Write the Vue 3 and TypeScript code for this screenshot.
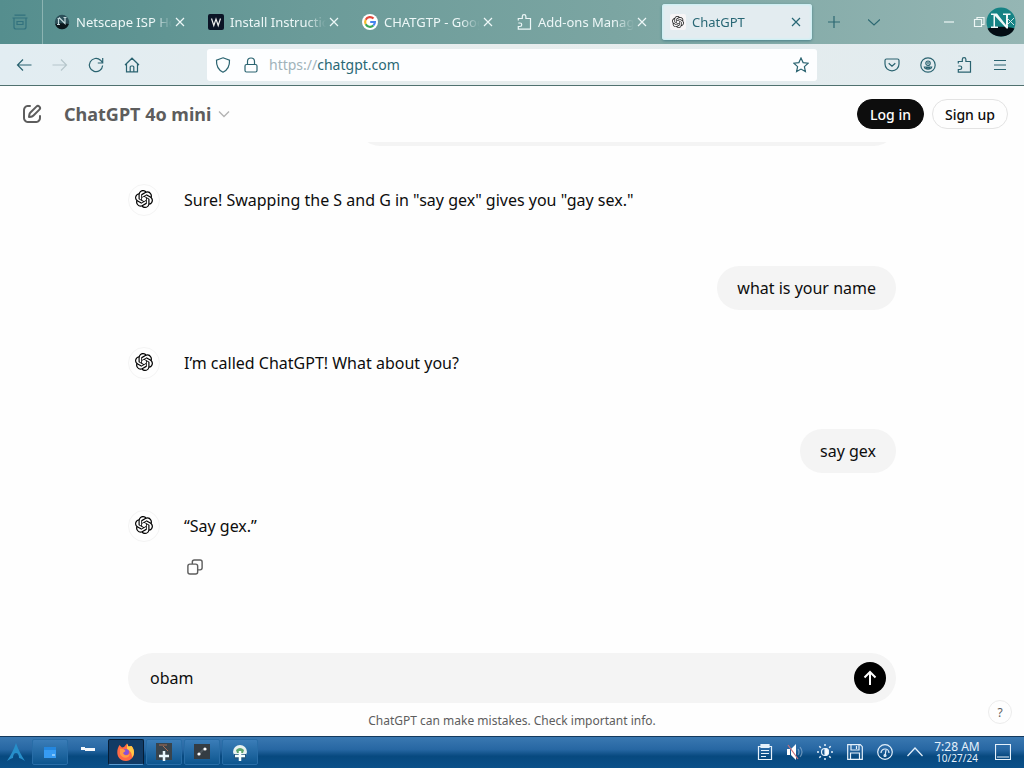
<script setup lang="ts">
import { ref } from 'vue'

interface Tab {
  id: string
  title: string
  active?: boolean
}

interface Message {
  role: 'user' | 'assistant'
  text: string
  copy?: boolean
}

const tabs: Tab[] = [
  { id: 'netscape', title: 'Netscape ISP Home' },
  { id: 'wiki', title: 'Install Instructions' },
  { id: 'google', title: 'CHATGTP - Google Search' },
  { id: 'addons', title: 'Add-ons Manager' },
  { id: 'gpt', title: 'ChatGPT', active: true },
]

const messages: Message[] = [
  { role: 'assistant', text: 'Sure! Swapping the S and G in "say gex" gives you "gay sex."' },
  { role: 'user', text: 'what is your name' },
  { role: 'assistant', text: 'I’m called ChatGPT! What about you?' },
  { role: 'user', text: 'say gex' },
  { role: 'assistant', text: '“Say gex.”', copy: true },
]

const navIcons = [
  { label: 'Back', path: 'M15.500 8H1.500M7 2.500 1.500 8 7 13.500', off: false },
  { label: 'Forward', path: 'M.5 8h14M9 2.500 14.500 8 9 13.500', off: true },
  { label: 'Reload', path: 'M14.600 8.500A6.600 6.600 0 1 1 12.500 3.200L14.200 5M14.700 1v5H9.800', off: false },
  { label: 'Home', path: 'M1 8 8 1.200 15 8M2.500 7v7.800h11V7M6.200 14.500V10q0-1 1-1h1.600q1 0 1 1v4.500', off: false },
]

const toolIcons = [
  { label: 'Save to Pocket', path: 'M2.500 2h11Q15 2 15 3.500V7a7 6.800 0 0 1-14 0V3.500Q1 2 2.500 2ZM4.700 6.200 8 9.300l3.300-3.100' },
  { label: 'Account', path: 'M8 .8a7.200 7.200 0 1 1 0 14.400A7.200 7.200 0 0 1 8 .8ZM8 4a2 2 0 1 1 0 4.400A2 2 0 0 1 8 4ZM8 5v2M4.300 10h7.400c-.5 3-6.900 3-7.400 0ZM6 11h4' },
  { label: 'Extensions', path: 'M2.300 6.500V4.500h4V2.500a1.800 1.800 0 0 1 3.600 0v2h4.600v10.700H2.300v-2.700h1.700a1.700 1.700 0 0 0 0-3.500H2.300' },
  { label: 'Menu', path: 'M2 3.500h12M2 8h12M2 12.500h12' },
]

const draft = ref('obam')
</script>

<template>
  <div class="desktop">
    <svg class="defs" aria-hidden="true">
      <symbol id="knot" viewBox="0 0 24 24">
        <path d="M22.2819 9.8211a5.9847 5.9847 0 0 0-.5157-4.9108 6.0462 6.0462 0 0 0-6.5098-2.9A6.0651 6.0651 0 0 0 4.9807 4.1818a5.9847 5.9847 0 0 0-3.9977 2.9 6.0462 6.0462 0 0 0 .7427 7.0966 5.98 5.98 0 0 0 .511 4.9107 6.051 6.051 0 0 0 6.5146 2.9001A5.9847 5.9847 0 0 0 13.2599 24a6.0557 6.0557 0 0 0 5.7718-4.2058 5.9894 5.9894 0 0 0 3.9977-2.9001 6.0557 6.0557 0 0 0-.7475-7.0729zm-9.022 12.6081a4.4755 4.4755 0 0 1-2.8764-1.0408l.1419-.0804 4.7783-2.7582a.7948.7948 0 0 0 .3927-.6813v-6.7369l2.02 1.1686a.071.071 0 0 1 .038.052v5.5826a4.504 4.504 0 0 1-4.4945 4.4944zm-9.6607-4.1254a4.4708 4.4708 0 0 1-.5346-3.0137l.142.0852 4.783 2.7582a.7712.7712 0 0 0 .7806 0l5.8428-3.3685v2.3324a.0804.0804 0 0 1-.0332.0615L9.74 19.9502a4.4992 4.4992 0 0 1-6.1408-1.6464zM2.3408 7.8956a4.485 4.485 0 0 1 2.3655-1.9728V11.6a.7664.7664 0 0 0 .3879.6765l5.8144 3.3543-2.0201 1.1685a.0757.0757 0 0 1-.071 0l-4.8303-2.7865A4.504 4.504 0 0 1 2.3408 7.872zm16.5963 3.8558L13.1038 8.364 15.1192 7.2a.0757.0757 0 0 1 .071 0l4.8303 2.7913a4.4944 4.4944 0 0 1-.6765 8.1042v-5.6772a.79.79 0 0 0-.407-.667zm2.0107-3.0231l-.142-.0852-4.7735-2.7818a.7759.7759 0 0 0-.7854 0L9.409 9.2297V6.8974a.0662.0662 0 0 1 .0284-.0615l4.8303-2.7866a4.4992 4.4992 0 0 1 6.6802 4.66zM8.3065 12.863l-2.02-1.1638a.0804.0804 0 0 1-.038-.0567V6.0742a4.4992 4.4992 0 0 1 7.3757-3.4537l-.142.0805L8.704 5.459a.7948.7948 0 0 0-.3927.6813zm1.0976-2.3654l2.602-1.4998 2.6069 1.4998v2.9994l-2.5974 1.4997-2.6067-1.4997Z" />
      </symbol>
    </svg>

    <div class="tabstrip">
      <button class="view" aria-label="Recent browsing">
        <svg viewBox="0 0 16 16" class="line"><path d="M2.500 1.200h11M.5 4h15M2 4v9q0 2 2 2h8q2 0 2-2V4M5 7.500h6v3H5z" /></svg>
      </button>
      <div class="tabs">
        <div v-for="tab in tabs" :key="tab.id" class="tab" :class="{ active: tab.active }">
          <svg v-if="tab.id === 'netscape'" class="fav" viewBox="0 0 16 16">
            <circle cx="8" cy="8" r="7.200" fill="#2c5059" />
            <path d="M1.200 10c4-1 9-1 13.600 0-2 7-11.600 7-13.600 0Z" fill="#0b161b" />
            <path d="M3 10.500h3M4.500 10V4.500H3.500M5 3.500l6 6V4M9.500 3.500h3" stroke="#c3d8db" fill="none" stroke-width="1.200" />
          </svg>
          <svg v-else-if="tab.id === 'wiki'" class="fav" viewBox="0 0 16 16">
            <rect width="16" height="16" rx="2" fill="#0b1426" />
            <path d="m3.500 4.500 2.300 7L8 5l2.200 6.500 2.300-7" stroke="#eee" fill="none" stroke-width="1.200" />
          </svg>
          <svg v-else-if="tab.id === 'google'" class="fav" viewBox="0 0 16 16">
            <circle cx="8" cy="8" r="8" fill="#fff" />
            <g fill="none" stroke-width="2.200">
              <path d="M11.500 4.600A4.900 4.900 0 0 0 3.700 5.700" stroke="#e5483b" />
              <path d="M3.700 5.700a5 5 0 0 0 0 4.600" stroke="#f5bb2c" />
              <path d="M3.700 10.300a4.900 4.900 0 0 0 7.600 1.200" stroke="#39a757" />
              <path d="M11.300 11.500A4.800 4.800 0 0 0 12.900 8H8.200" stroke="#4684ee" />
            </g>
          </svg>
          <svg v-else-if="tab.id === 'addons'" class="fav line" viewBox="0 0 16 16">
            <path :d="toolIcons[2].path" />
          </svg>
          <svg v-else class="fav knot-fav" viewBox="0 0 16 16">
            <rect width="16" height="16" rx="2" fill="#f7f5f6" />
            <use href="#knot" x="2" y="2" width="12" height="12" />
          </svg>
          <span class="title">{{ tab.title }}</span>
          <button class="close" :aria-label="'Close ' + tab.title">
            <svg viewBox="0 0 10 10" class="line"><path d="m1 1 8 8M9 1 1 9" /></svg>
          </button>
        </div>
      </div>
      <button class="strip-btn" aria-label="New tab">
        <svg viewBox="0 0 12 12" class="line"><path d="M6 0v12M0 6h12" /></svg>
      </button>
      <button class="strip-btn" aria-label="List all tabs">
        <svg viewBox="0 0 12 12" class="line"><path d="m0 3.500 6 5.500 6-5.500" /></svg>
      </button>
      <div class="window-controls">
        <button aria-label="Minimize"><svg viewBox="0 0 12 12" class="line"><path d="M1 6h10" /></svg></button>
        <button aria-label="Restore"><svg viewBox="0 0 12 12" class="line"><path d="M1.500 3.500h7v7h-7zM4 3.500v-2h7v7H8.500" /></svg></button>
        <button class="netscape" aria-label="Close window">
          <svg viewBox="0 0 30 30">
            <circle cx="15" cy="15" r="14.500" fill="#158284" />
            <path d="M1.500 21.500c7-2.500 20-2.500 27 0-4.500 10.500-22.500 10.500-27 0Z" fill="#040d14" />
            <path d="M5 6.500h6l9 11.500V8h-3V6.500h7.500V8H22v13.500h-1.500L9 9v10.500h3V21H5v-1.500h2.500V8H5Z" fill="#f0f8f8" />
            <path d="m21 11 7 7M28 11l-7 7" stroke="#cfe6e6" stroke-width="1" />
          </svg>
        </button>
      </div>
    </div>

    <nav class="toolbar" aria-label="Browser">
      <button v-for="i in navIcons" :key="i.label" class="tool" :aria-label="i.label" :disabled="i.off">
        <svg viewBox="0 0 16 16" class="line"><path :d="i.path" /></svg>
      </button>
      <div class="spring"></div>
      <div class="urlbar">
        <svg viewBox="0 0 16 16" class="line"><path d="M8 .8 14.500 3.200C14.800 9 12.500 13 8 15.200 3.500 13 1.200 9 1.500 3.200Z" /></svg>
        <svg viewBox="0 0 16 16" class="line"><path d="M3.500 7.500h9q1.500 0 1.500 1.500v4.500q0 1.500-1.500 1.500h-9Q2 15 2 13.500V9q0-1.500 1.500-1.500ZM4.500 7.500V4.500a3.500 3.500 0 0 1 7 0v3" /></svg>
        <a href="https://chatgpt.com"><span>https://</span>chatgpt.com</a>
        <button aria-label="Bookmark this page">
          <svg viewBox="0 0 16 16" class="line"><path d="m8 1 2.100 4.600 5.100.6-3.800 3.400 1 5L8 12.100l-4.400 2.500 1-5L.8 6.200l5.100-.6Z" /></svg>
        </button>
      </div>
      <div class="spring"></div>
      <button v-for="i in toolIcons" :key="i.label" class="tool" :aria-label="i.label">
        <svg viewBox="0 0 16 16" class="line"><path :d="i.path" /></svg>
      </button>
    </nav>

    <main class="page">
      <header class="header">
        <button class="compose" aria-label="New chat">
          <svg viewBox="0 0 24 24"><path d="M15.673 3.913a3.121 3.121 0 1 1 4.414 4.414l-5.937 5.937a5 5 0 0 1-2.828 1.415l-2.180.310a1 1 0 0 1-1.132-1.130l.311-2.180A5 5 0 0 1 9.736 9.850Zm3 1.414a1.121 1.121 0 0 0-1.586 0l-5.937 5.937a3 3 0 0 0-.849 1.697l-.123.860.860-.122a3 3 0 0 0 1.698-.849l5.937-5.937a1.121 1.121 0 0 0 0-1.586ZM11 4a1 1 0 0 1-1 1c-.998 0-1.702.008-2.253.060-.540.052-.862.141-1.109.267a3 3 0 0 0-1.311 1.311c-.134.263-.226.611-.276 1.216C5.001 8.471 5 9.264 5 10.400v3.200c0 1.137 0 1.929.051 2.546.050.605.142.953.276 1.216a3 3 0 0 0 1.311 1.311c.263.134.611.226 1.216.276.617.050 1.410.051 2.546.051h3.200c1.137 0 1.929 0 2.546-.051.605-.050.953-.142 1.216-.276a3 3 0 0 0 1.311-1.311c.126-.247.215-.569.266-1.108.053-.552.060-1.256.060-2.255a1 1 0 1 1 2 .002c0 .978-.006 1.780-.069 2.442-.064.673-.192 1.270-.475 1.827a5 5 0 0 1-2.185 2.185c-.592.302-1.232.428-1.961.487C15.600 21 14.727 21 13.643 21h-3.286c-1.084 0-1.958 0-2.666-.058-.728-.060-1.369-.185-1.960-.487a5 5 0 0 1-2.186-2.185c-.302-.592-.428-1.233-.487-1.961C3 15.600 3 14.727 3 13.643v-3.286c0-1.084 0-1.958.058-2.666.060-.729.185-1.369.487-1.961A5 5 0 0 1 5.730 3.545c.556-.284 1.154-.411 1.827-.475C8.220 3.007 9.021 3 10 3a1 1 0 0 1 1 1Z" /></svg>
        </button>
        <button class="model">
          ChatGPT 4o mini
          <svg viewBox="0 0 12 12"><path d="m1 3.500 5 5 5-5" /></svg>
        </button>
        <button class="pill dark">Log in</button>
        <button class="pill">Sign up</button>
      </header>

      <section class="chat">
        <div class="column">
          <div class="bubble scrolled"></div>
          <template v-for="(m, n) in messages" :key="n">
            <div v-if="m.role === 'user'" class="bubble">{{ m.text }}</div>
            <div v-else class="answer">
              <span class="avatar"><svg viewBox="0 0 24 24"><use href="#knot" /></svg></span>
              <p>{{ m.text }}</p>
            </div>
            <button v-if="m.copy" class="copy" aria-label="Copy">
              <svg viewBox="0 0 18 18"><path d="M3.300 5.800h6.400q2.300 0 2.300 2.300v6.400q0 2.300-2.300 2.300H3.300Q1 16.800 1 14.500V8.100Q1 5.800 3.300 5.800ZM6 5.800V3.500q0-2.300 2.300-2.300h6.400q2.300 0 2.300 2.300v6.400q0 2.300-2.300 2.300H12" /></svg>
            </button>
          </template>
        </div>
      </section>

      <form class="composer" @submit.prevent>
        <input v-model="draft" type="text" aria-label="Message ChatGPT" />
        <button aria-label="Send">
          <svg viewBox="0 0 16 16"><path d="M8 15V2M2.500 7.500 8 2l5.500 5.500" /></svg>
        </button>
      </form>
      <p class="note">ChatGPT can make mistakes. Check important info.</p>
      <button class="help" aria-label="Help">?</button>
    </main>

    <footer class="taskbar">
      <button class="launch" aria-label="Applications">
        <svg viewBox="0 0 20 20"><path d="M10 1c2 6 5 12 9 18-3-2-5-3-6-3 0-3-1-5-3-5s-3 2-3 5c-1 0-3 1-6 3C5 13 8 7 10 1Z" fill="#278fca" /></svg>
      </button>
      <button class="task" aria-label="Files">
        <svg viewBox="0 0 20 20"><path d="M4 5h12v11H4z" fill="#369bf3" /><path d="M4 5h12v3H4z" fill="#2487df" /><path d="M12 12h3v2h-3z" fill="#85c6fa" /></svg>
      </button>
      <button class="task plain" aria-label="Terminal">
        <svg viewBox="0 0 20 20"><path d="M3 5h4v1h10v3H7V8H3Z" fill="#f5f8fb" /></svg>
      </button>
      <button class="task current" aria-label="Firefox">
        <svg viewBox="0 0 20 20">
          <path d="M3.500 3 6 5.500 8 5l3-3.500 1.500 3L15.500 4c5 6 2.500 14.500-5.500 15C.5 18.500-.5 9 3.500 3Z" fill="#ff6a45" />
          <path d="m11 1.500 1.500 3L15.500 4c3 3.500 3.500 8 .5 11.500 0-5-2-7-5-8Z" fill="#ffc845" />
          <circle cx="10" cy="10" r="3" fill="#8750d8" />
          <path d="M4 7c2.500-.5 4 .5 5.500 2L7 11c1 3 5 3 7 .5C13.500 17 6 17 4 12Z" fill="#ff9b42" />
        </svg>
      </button>
      <button class="task" aria-label="Editor">
        <svg viewBox="0 0 20 20"><path d="M2 1h16v17H2z" fill="#39444c" /><path d="M5 3h8M9 4l5 5" stroke="#a86e55" /><path d="M10 9v10M5 14h10" stroke="#eaf8ff" stroke-width="2.500" /></svg>
      </button>
      <button class="task" aria-label="Games">
        <svg viewBox="0 0 20 20"><path d="M2 2h16v15H2z" fill="#343c43" /><path d="m6 13 7-7" stroke="#4e575e" stroke-width="2" /><circle cx="7" cy="12" r="1.600" fill="#fff" /><circle cx="13" cy="7" r="1.600" fill="#fff" /></svg>
      </button>
      <button class="task" aria-label="Downloads">
        <svg viewBox="0 0 20 20"><path d="M3 10a7 7 0 0 1 14 0l-1 3H4Z" fill="#e8f1ef" /><path d="M6 8q4-4 8 0l-1 3H7Z" fill="#5aa36d" /><path d="M4 12h12v5H4z" fill="#23577f" /><path d="M10 9v10M5 14h10" stroke="#f6ffff" stroke-width="2.500" /></svg>
      </button>
      <div class="grow"></div>
      <button class="tray" aria-label="Clipboard"><svg viewBox="0 0 16 16"><path d="M1.500 2.500h13v13h-13zM4 6.500h8M4 9.500h8M4 12.500h5" /><path d="M4 .5h8v3H4z" fill="#e5f1fb" /></svg></button>
      <button class="tray" aria-label="Volume"><svg viewBox="0 0 16 16"><path d="M0 5h3v6H0zM4 5l5-5v16l-5-5Z" fill="#fff" stroke="none" /><path d="M1 1l10 14" stroke="#c8707a" /><path d="M11 5q2 3 0 6M13 3q4 5 0 10" opacity=".4" /></svg></button>
      <button class="tray" aria-label="Brightness"><svg viewBox="0 0 16 16"><circle cx="8" cy="8" r="3.500" /><path d="M8 4.500a3.500 3.500 0 0 1 0 7Z" fill="#fff" /><path d="M8 0v2M8 14v2M0 8h2M14 8h2M2.300 2.300l1.500 1.500M12.200 12.200l1.500 1.500M2.300 13.700l1.500-1.500M12.200 3.800l1.500-1.500" stroke-width="1.500" /></svg></button>
      <button class="tray" aria-label="Disk"><svg viewBox="0 0 16 16"><path d="M.7.7h12.600l2 2v12.600H.7ZM4 1v5h8V1M3.500 15V9h9v6M9.500 2v3" /></svg></button>
      <button class="tray" aria-label="Performance"><svg viewBox="0 0 16 16"><circle cx="8" cy="8" r="7.300" /><path d="M4 9a4 4 0 1 1 8 0M8 12l1-6" /><circle cx="8" cy="11.500" r="1" /></svg></button>
      <button class="tray" aria-label="Show hidden"><svg viewBox="0 0 16 16"><path d="m.5 12 7.500-8 7.500 8" /></svg></button>
      <div class="clock"><time>7:28 AM</time><small>10/27/24</small></div>
      <button class="tray peek" aria-label="Show desktop"><svg viewBox="0 0 16 16"><path d="M.5.5h15v15H.5zM2 13h12" /></svg></button>
    </footer>
  </div>
</template>

<style>
body {
  margin: 0;
}
</style>

<style scoped>
.desktop {
  display: flex;
  flex-direction: column;
  min-height: 100vh;
  font-family: 'Noto Sans', 'Open Sans', sans-serif;
  color: #0d0d0d;
  background: #fefefe;
}
.desktop * {
  box-sizing: border-box;
}
.defs {
  position: absolute;
  width: 0;
  height: 0;
}
button {
  display: flex;
  align-items: center;
  justify-content: center;
  flex: none;
  padding: 0;
  border: 0;
  background: none;
  color: inherit;
  font: inherit;
}
svg {
  flex: none;
  width: 16px;
  height: 16px;
}
.line {
  fill: none;
  stroke: currentColor;
  stroke-width: 1.2;
}

/* tab strip */
.tabstrip {
  display: flex;
  align-items: center;
  height: 44px;
  color: #2c6872;
  background: linear-gradient(90deg, #558e8e 0%, #6b9b99 30%, #7ba5a2 60%, #95b6b4 100%);
}
.view {
  width: 43px;
  height: 44px;
  margin-right: 3px;
  padding-right: 2px;
  border-right: 1px solid #8cb4b2;
  color: #32727e;
}
.tabs {
  display: flex;
  gap: 4px;
}
.tab {
  display: flex;
  align-items: center;
  width: 150px;
  height: 36px;
  padding: 0 8px;
  color: #edf7f7;
  font-size: 13px;
}
.tab.active {
  border-radius: 3px;
  color: #286775;
  background: #e3ecf0;
  box-shadow: inset 0 0 2px 1px #c9f0f5, 0 1px 3px #4a8088;
}
.knot-fav {
  fill: #222;
}
.title {
  flex: 1;
  margin-left: 6px;
  overflow: hidden;
  white-space: nowrap;
  -webkit-mask-image: linear-gradient(90deg, #000 80%, transparent);
  mask-image: linear-gradient(90deg, #000 80%, transparent);
}
.close {
  width: 16px;
  height: 20px;
}
.close svg {
  width: 10px;
  height: 10px;
}
.strip-btn {
  width: 40px;
  height: 36px;
  margin-left: 2px;
}
.strip-btn + .strip-btn {
  margin-left: 0;
}
.strip-btn svg,
.window-controls svg {
  width: 12px;
  height: 12px;
}
.window-controls {
  display: flex;
  align-items: center;
  margin-left: auto;
  padding-right: 8px;
  color: #edf6f5;
}
.window-controls button {
  width: 30px;
  height: 30px;
}
.window-controls .netscape {
  margin-left: -8px;
}
.window-controls .netscape svg {
  width: 30px;
  height: 30px;
}

/* navigation toolbar */
.toolbar {
  display: flex;
  align-items: center;
  height: 42px;
  padding: 0 6px;
  border-bottom: 1px solid #50716f;
  color: #2a6370;
  background: linear-gradient(90deg, #e2edf2, #e7eded 50%, #e1ebef);
}
.tool {
  width: 36px;
  height: 36px;
}
.tool:disabled {
  color: #b6c6cb;
}
.spring {
  flex: 57 1 0;
}
.urlbar {
  display: flex;
  flex: 594 1 0;
  align-items: center;
  gap: 12px;
  height: 32px;
  padding: 0 8px;
  border-radius: 3px;
  background: #fdfeff;
}
.urlbar a {
  flex: 1;
  margin-left: -2px;
  color: #2a6875;
  font-size: 14px;
  text-decoration: none;
}
.urlbar a span {
  color: #a1b3ba;
}

/* chat page */
.page {
  position: relative;
  display: flex;
  flex: 1;
  flex-direction: column;
}
.header {
  display: flex;
  align-items: center;
  gap: 8px;
  height: 56px;
  padding: 0 16px;
}
.compose {
  width: 32px;
  height: 32px;
}
.compose svg {
  width: 24px;
  height: 24px;
  fill: #5d5d5d;
}
.model {
  gap: 7px;
  margin: 0 auto 0 8px;
  color: #5d5d5d;
  font-size: 18px;
  font-weight: 700;
}
.model svg {
  width: 12px;
  height: 12px;
  fill: none;
  stroke: #b4b4b4;
  stroke-width: 1.4;
}
.pill {
  height: 30px;
  padding: 0 12px;
  border: 1px solid #e3e3e3;
  border-radius: 15px;
  font-size: 14px;
  font-weight: 500;
}
.pill.dark {
  border-color: #0d0d0d;
  color: #fff;
  background: #0d0d0d;
}
.chat {
  flex: 1;
  overflow: hidden;
  padding: 0 16px;
}
.column,
.composer {
  max-width: 768px;
  margin: 0 auto;
}
.column {
  display: flex;
  flex-direction: column;
  align-items: flex-start;
}
.bubble {
  align-self: flex-end;
  max-width: 70%;
  margin: 50px 0 37px;
  padding: 8px 20px;
  border-radius: 22px;
  font-size: 16px;
  line-height: 28px;
  background: #f4f4f4;
}
.bubble.scrolled {
  width: 70%;
  height: 44px;
  margin: -40px 0 38px;
}
.answer {
  display: flex;
  align-items: center;
  gap: 24px;
}
.answer p {
  margin: 0;
  font-size: 16px;
  line-height: 28px;
}
.avatar {
  display: flex;
  align-items: center;
  justify-content: center;
  width: 32px;
  height: 32px;
  padding-bottom: 2px;
  border: 1px solid #f4f4f4;
  border-radius: 50%;
}
.avatar svg {
  width: 18px;
  height: 18px;
}
.copy {
  width: 30px;
  height: 30px;
  margin: 10px 0 0 52px;
}
.copy svg {
  fill: none;
  stroke: #5d5d5d;
  stroke-width: 1.6;
}
.composer {
  display: flex;
  align-items: center;
  width: calc(100% - 32px);
  height: 50px;
  padding: 0 10px 0 22px;
  border-radius: 25px;
  background: #f4f4f4;
}
.composer input {
  flex: 1;
  min-width: 0;
  padding: 0;
  border: 0;
  outline: 0;
  color: inherit;
  background: none;
  font: inherit;
  font-size: 16px;
}
.composer button {
  width: 32px;
  height: 32px;
  border-radius: 50%;
  background: #000;
}
.composer svg {
  fill: none;
  stroke: #fff;
  stroke-width: 2;
}
.note {
  margin: 0;
  padding: 10px 0 7px;
  color: #5d5d5d;
  font-size: 12px;
  line-height: 16px;
  text-align: center;
}
.help {
  position: absolute;
  right: 12px;
  bottom: 12px;
  width: 24px;
  height: 24px;
  border: 1px solid #ececec;
  border-radius: 50%;
  color: #5d5d5d;
  font-size: 12px;
}

/* desktop panel */
.taskbar {
  display: flex;
  align-items: center;
  height: 32px;
  padding: 0 6px 2px 0;
  border-top: 1px solid #14385c;
  color: #e5f1fb;
  background: linear-gradient(#3a78b1 0%, #2767a3 40%, #07497f 62%, #0b5089 100%);
}
.launch {
  width: 32px;
}
.launch svg,
.task svg {
  width: 20px;
  height: 20px;
}
.task {
  width: 36px;
  height: 26px;
  margin-left: 2px;
  border: 1px solid #286da7;
  border-radius: 2px;
  background: linear-gradient(#3b7db8, #0d568f);
}
.task:nth-child(2) {
  margin-left: 0;
}
.task.plain {
  border-color: transparent;
  background: none;
}
.task.current {
  border-color: #061d35 #061d35 #5b9bd0;
  background: #123b65;
}
.grow {
  flex: 1;
}
.tray {
  width: 30px;
  height: 30px;
}
.tray svg {
  fill: none;
  stroke: currentColor;
  stroke-width: 1.2;
}
.clock {
  display: flex;
  flex-direction: column;
  align-items: center;
  width: 54px;
  font-size: 12px;
  line-height: 13px;
}
.clock small {
  font-size: 10px;
  line-height: 11px;
}
.peek {
  margin-left: 4px;
}
</style>
